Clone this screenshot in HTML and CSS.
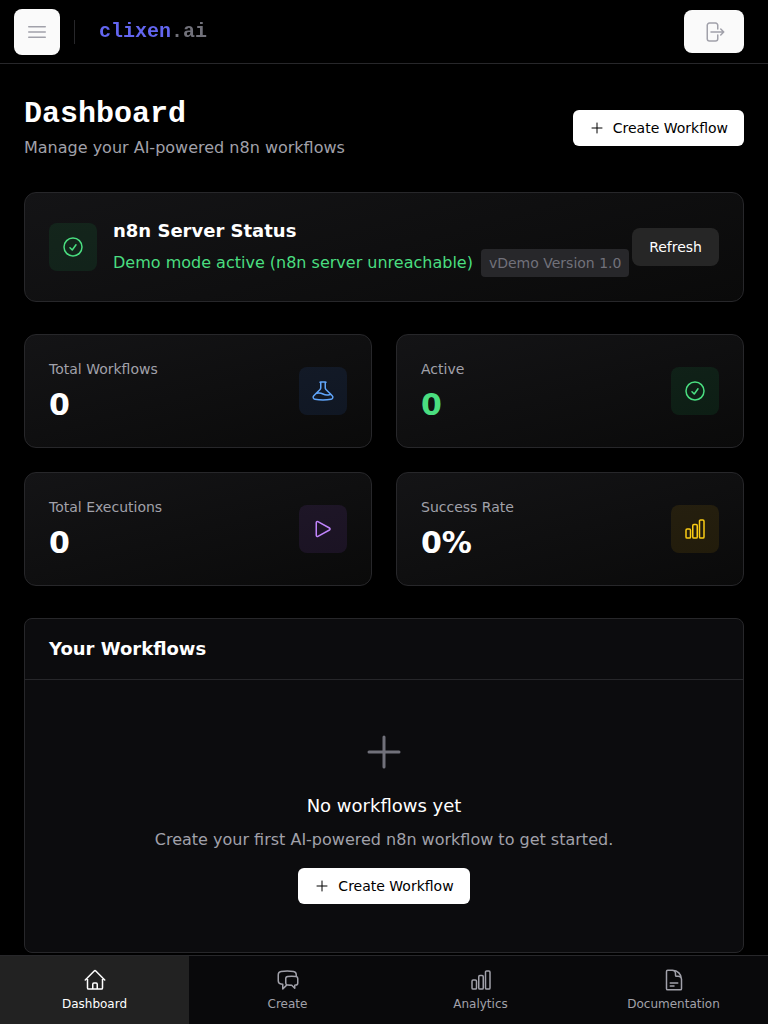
FILE: index.html
```html
<!DOCTYPE html>
<html lang="en">
<head>
<meta charset="utf-8">
<title>clixen.ai</title>
<link rel="stylesheet" href="styles.css">
</head>
<body>
<svg class="sprite" aria-hidden="true">
  <symbol id="plus" viewBox="0 0 24 24"><path d="M12 4.5v15m7.5-7.5h-15"/></symbol>
  <symbol id="check" viewBox="0 0 24 24"><path d="M9 12.75L11.25 15 15 9.75M21 12a9 9 0 11-18 0 9 9 0 0118 0z"/></symbol>
  <symbol id="chart" viewBox="0 0 24 24"><path d="M3 13.125C3 12.504 3.504 12 4.125 12h2.25c.621 0 1.125.504 1.125 1.125v6.75C7.5 20.496 6.996 21 6.375 21h-2.25A1.125 1.125 0 013 19.875v-6.75zM9.75 8.625c0-.621.504-1.125 1.125-1.125h2.25c.621 0 1.125.504 1.125 1.125v11.25c0 .621-.504 1.125-1.125 1.125h-2.25a1.125 1.125 0 01-1.125-1.125V8.625zM16.5 4.125c0-.621.504-1.125 1.125-1.125h2.25C20.496 3 21 3.504 21 4.125v15.75c0 .621-.504 1.125-1.125 1.125h-2.25a1.125 1.125 0 01-1.125-1.125V4.125z"/></symbol>
</svg>
<header class="topbar">
  <div class="brand">
    <button class="menu-btn" aria-label="Menu"><svg class="icon" viewBox="0 0 24 24"><path d="M3.75 6.75h16.5M3.75 12h16.5m-16.5 5.25h16.5"/></svg></button>
    <span class="divider"></span>
    <div class="logo"><span class="logo-name">clixen</span><span class="logo-tld">.ai</span></div>
  </div>
  <button class="logout-btn" aria-label="Sign out"><svg class="icon" viewBox="0 0 24 24"><path d="M15.75 9V5.25A2.25 2.25 0 0013.5 3h-6a2.25 2.25 0 00-2.25 2.25v13.5A2.25 2.25 0 007.5 21h6a2.25 2.25 0 002.25-2.25V15m3 0l3-3m0 0l-3-3m3 3H9"/></svg></button>
</header>
<main class="content">
  <div class="page-head">
    <div>
      <h1>Dashboard</h1>
      <p class="subtitle">Manage your AI-powered n8n workflows</p>
    </div>
    <button class="create-btn"><svg class="icon small"><use href="#plus"/></svg>Create Workflow</button>
  </div>
  <section class="card status">
    <div class="tile green"><svg class="icon"><use href="#check"/></svg></div>
    <div class="status-text">
      <h2>n8n Server Status</h2>
      <div class="status-line"><span>Demo mode active (n8n server unreachable)</span><span class="version">vDemo Version 1.0</span></div>
    </div>
    <button class="refresh-btn">Refresh</button>
  </section>
  <section class="stats">
    <div class="card stat">
      <div><p class="label">Total Workflows</p><p class="value">0</p></div>
      <div class="tile blue"><svg class="icon" viewBox="0 0 24 24"><path d="M9.75 3.104v5.714a2.25 2.25 0 01-.659 1.591L5 14.5M9.75 3.104c-.251.023-.501.05-.75.082m.75-.082a24.301 24.301 0 014.5 0m0 0v5.714c0 .597.237 1.17.659 1.591L19.8 15.3M14.25 3.104c.251.023.501.05.75.082M19.8 15.3l-1.57.393A9.065 9.065 0 0112 15a9.065 9.065 0 00-6.23-.693L5 14.5m14.8.8l1.402 1.402c1.232 1.232.65 3.318-1.067 3.611A48.309 48.309 0 0112 21c-2.773 0-5.491-.235-8.135-.687-1.718-.293-2.3-2.379-1.067-3.61L5 14.5"/></svg></div>
    </div>
    <div class="card stat">
      <div><p class="label">Active</p><p class="value positive">0</p></div>
      <div class="tile green"><svg class="icon"><use href="#check"/></svg></div>
    </div>
    <div class="card stat">
      <div><p class="label">Total Executions</p><p class="value">0</p></div>
      <div class="tile purple"><svg class="icon" viewBox="0 0 24 24"><path d="M5.25 5.653c0-.856.917-1.398 1.667-.986l11.54 6.348a1.125 1.125 0 010 1.971l-11.54 6.347a1.125 1.125 0 01-1.667-.985V5.653z"/></svg></div>
    </div>
    <div class="card stat">
      <div><p class="label">Success Rate</p><p class="value">0%</p></div>
      <div class="tile yellow"><svg class="icon"><use href="#chart"/></svg></div>
    </div>
  </section>
  <section class="panel">
    <h2 class="panel-head">Your Workflows</h2>
    <div class="empty">
      <svg class="icon large"><use href="#plus"/></svg>
      <h3>No workflows yet</h3>
      <p>Create your first AI-powered n8n workflow to get started.</p>
      <button class="create-btn"><svg class="icon small"><use href="#plus"/></svg>Create Workflow</button>
    </div>
  </section>
</main>
<nav class="tabs">
  <a class="tab active"><svg class="icon" viewBox="0 0 24 24"><path d="M2.25 12l8.954-8.955c.44-.439 1.152-.439 1.591 0L21.75 12M4.5 9.75v10.125c0 .621.504 1.125 1.125 1.125H9.75v-4.875c0-.621.504-1.125 1.125-1.125h2.25c.621 0 1.125.504 1.125 1.125V21h4.125c.621 0 1.125-.504 1.125-1.125V9.75M8.25 21h8.25"/></svg>Dashboard</a>
  <a class="tab"><svg class="icon" viewBox="0 0 24 24"><path d="M20.25 8.511c.884.284 1.5 1.128 1.5 2.097v4.286c0 1.136-.847 2.1-1.98 2.193-.34.027-.68.052-1.02.072v3.091l-3-3c-1.354 0-2.694-.055-4.02-.163a2.115 2.115 0 01-.825-.242m9.345-8.334a2.126 2.126 0 00-.476-.095 48.64 48.64 0 00-8.048 0c-1.131.094-1.976 1.057-1.976 2.192v4.286c0 .837.46 1.58 1.155 1.951m9.345-8.334V6.637c0-1.621-1.152-3.026-2.76-3.235A48.455 48.455 0 0011.25 3c-2.115 0-4.198.137-6.24.402-1.608.209-2.76 1.614-2.76 3.235v6.226c0 1.621 1.152 3.026 2.76 3.235.577.075 1.157.14 1.74.194V21l4.155-4.155"/></svg>Create</a>
  <a class="tab"><svg class="icon"><use href="#chart"/></svg>Analytics</a>
  <a class="tab"><svg class="icon" viewBox="0 0 24 24"><path d="M19.5 14.25v-2.625a3.375 3.375 0 00-3.375-3.375h-1.5A1.125 1.125 0 0113.5 7.125v-1.5a3.375 3.375 0 00-3.375-3.375H8.25m0 12.75h7.5m-7.5 3H12M10.5 2.25H5.625c-.621 0-1.125.504-1.125 1.125v17.25c0 .621.504 1.125 1.125 1.125h12.75c.621 0 1.125-.504 1.125-1.125V11.25a9 9 0 00-9-9z"/></svg>Documentation</a>
</nav>
</body>
</html>
```

FILE: styles.css
```css
* { box-sizing: border-box; margin: 0; padding: 0; }

body {
  display: flex;
  flex-direction: column;
  height: 100vh;
  overflow: hidden;
  background: #000;
  color: #fff;
  font: 16px/24px "DejaVu Sans", sans-serif;
}

button { border: 0; font: inherit; }

.sprite { display: none; }

.icon {
  display: block;
  flex: none;
  width: 24px;
  height: 24px;
  fill: none;
  stroke: currentColor;
  stroke-width: 1.5;
  stroke-linecap: round;
  stroke-linejoin: round;
}
.icon.small { width: 16px; height: 16px; }
.icon.large { width: 48px; height: 48px; color: #71717a; }

.topbar {
  display: flex;
  flex: none;
  align-items: center;
  justify-content: space-between;
  height: 64px;
  padding: 0 24px 0 14px;
  border-bottom: 1px solid #27272a;
}
.brand { display: flex; align-items: center; }
.menu-btn, .logout-btn {
  display: flex;
  align-items: center;
  justify-content: center;
  border-radius: 8px;
  background: #fafafa;
  color: #a1a1aa;
}
.menu-btn { width: 46px; height: 46px; }
.logout-btn { width: 60px; height: 43px; }
.divider { width: 1px; height: 24px; margin: 0 24px 0 14px; background: #27272a; }
.logo {
  font: bold 20px/28px "Liberation Mono", monospace;
}
.logo-name, .logo-tld {
  -webkit-background-clip: text;
  background-clip: text;
  color: transparent;
}
.logo-name { background-image: linear-gradient(#6366f1, #6366f1); }
.logo-tld { background-image: linear-gradient(#71717a, #71717a); }

.content { flex: 1; min-height: 0; padding: 32px 24px 0; }

.page-head {
  display: flex;
  align-items: center;
  justify-content: space-between;
  margin-bottom: 32px;
}
h1 { margin-bottom: 4px; font: bold 30px/36px "Liberation Mono", monospace; }
h2 { font-size: 18px; line-height: 28px; font-weight: bold; }
.subtitle { color: #a1a1aa; }

.create-btn {
  display: flex;
  align-items: center;
  gap: 8px;
  height: 36px;
  padding: 0 16px;
  border-radius: 6px;
  background: #fff;
  color: #000;
  font-size: 14px;
  line-height: 20px;
}

.card {
  display: flex;
  align-items: center;
  padding: 24px;
  border: 1px solid #27272a;
  border-radius: 12px;
  background: linear-gradient(165deg, #141416, #0a0a0a);
}

.tile {
  display: flex;
  flex: none;
  align-items: center;
  justify-content: center;
  width: 48px;
  height: 48px;
  border-radius: 8px;
}
.green { background: rgba(34, 197, 94, .1); color: #4ade80; }
.blue { background: rgba(59, 130, 246, .1); color: #60a5fa; }
.purple { background: rgba(168, 85, 247, .1); color: #c084fc; }
.yellow { background: rgba(234, 179, 8, .1); color: #facc15; }

.status { margin-bottom: 32px; }
.status-text { margin-left: 16px; white-space: nowrap; }
.status-line { display: flex; align-items: center; gap: 8px; margin-top: 4px; color: #4ade80; }
.version {
  padding: 4px 8px;
  border-radius: 4px;
  background: #27272a;
  color: #71717a;
  font-size: 14px;
  line-height: 20px;
}
.refresh-btn {
  height: 38px;
  margin-left: auto;
  padding: 0 17px;
  border-radius: 8px;
  background: #262626;
  color: #fff;
  font-size: 14px;
  line-height: 20px;
}

.stats { display: grid; grid-template-columns: 1fr 1fr; gap: 24px; margin-bottom: 32px; }
.stat { justify-content: space-between; }
.label { margin-bottom: 8px; color: #a1a1aa; font-size: 14px; line-height: 20px; }
.value { font-size: 30px; line-height: 36px; font-weight: bold; }
.positive { color: #4ade80; }

.panel { border: 1px solid #27272a; border-radius: 8px; background: #0c0c0e; }
.panel-head { padding: 16px 24px; border-bottom: 1px solid #27272a; }
.empty { display: flex; flex-direction: column; align-items: center; padding: 48px 24px; }
.empty h3 { margin: 16px 0 8px; font-size: 18px; line-height: 28px; font-weight: normal; }
.empty p { margin-bottom: 16px; color: #a1a1aa; }

.tabs {
  display: grid;
  flex: none;
  grid-template-columns: repeat(4, 1fr);
  gap: 4px;
  height: 69px;
  border-top: 1px solid #27272a;
  background: #09090b;
}
.tab {
  display: flex;
  flex-direction: column;
  align-items: center;
  gap: 4px;
  padding-top: 12px;
  color: #a1a1aa;
  font-size: 12px;
  line-height: 16px;
}
.tab.active { background: #222; color: #fff; }
```
